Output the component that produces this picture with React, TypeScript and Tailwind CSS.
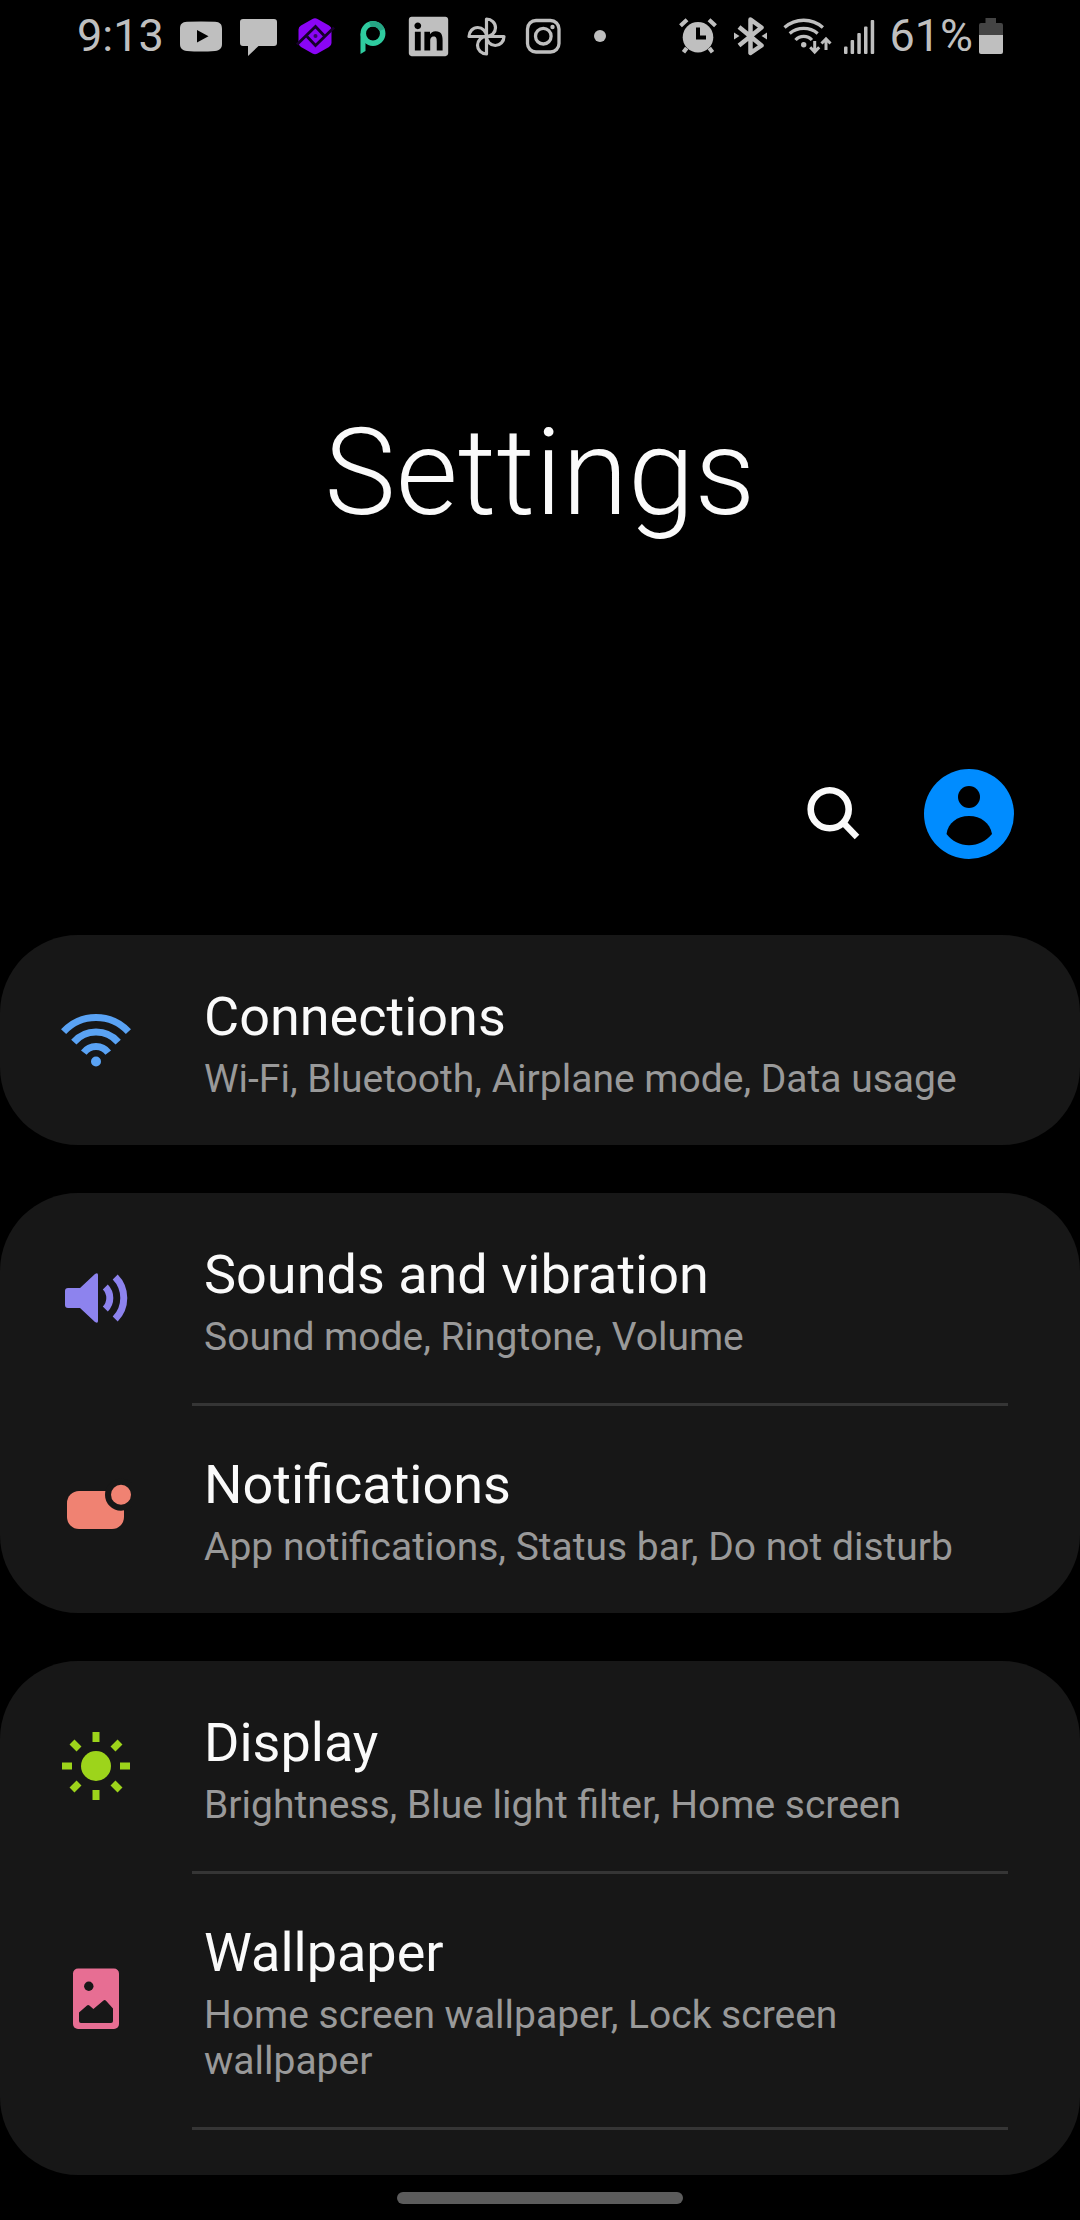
import type { ReactNode } from "react";
import { FaLinkedin } from "react-icons/fa";

type SettingsItem = {
  title: string;
  summary: string;
  icon: ReactNode;
};

const StatusIcon = ({ children }: { children: ReactNode }) => (
  <svg viewBox="0 0 42 42" className="size-[42px]" fill="currentColor">
    {children}
  </svg>
);

const NotificationIcons = () => (
  <div className="flex items-center gap-[15px]">
    {/* YouTube */}
    <StatusIcon>
      <path
        fillRule="evenodd"
        d="M7 6.8Q21 6 35 6.8C40 7.2 42 9 42 14v15c0 4-2 6.500-7 7Q21 37 7 36C2 35.500 0 33 0 29V14C0 9 2 7.200 7 6.800ZM17 15v12.500l11.500-6.200Z"
      />
    </StatusIcon>
    {/* Messages */}
    <StatusIcon>
      <path d="M6 4h31q3 0 3 3v21q0 3-3 3H21.500L11 41V31H6q-3 0-3-3V7q0-3 3-3Z" />
    </StatusIcon>
    <StatusIcon>
      <path
        className="fill-[#8a05f5]"
        d="M18.500 4q2.500-1.500 5 0L35 10.500q2.500 1.500 2.500 4V28q0 2.500-2.500 4L23.500 38.500q-2.500 1.500-5 0L7 32q-2.500-1.500-2.500-4V14.500q0-2.500 2.500-4Z"
      />
      <g fill="none" className="stroke-[#16002b]" strokeWidth="2.800">
        <path d="M3 29.500 21.500 11.500 30 20.500" />
        <path d="M40 12.500 21.500 30.500 13 21.500" />
      </g>
      <circle cx="21.500" cy="21" r="2" className="fill-[#3a0669]" />
    </StatusIcon>
    <StatusIcon>
      <g fill="none" strokeWidth="5.5">
        <circle cx="22" cy="18.500" r="9.700" className="stroke-[#2fcb9f]" />
        <path d="M19 9.400A9.700 9.700 0 0 1 31 15" className="stroke-[#25a584]" />
      </g>
      <path d="M9.500 18.500h5v17.500L9.500 39Z" className="fill-[#2fcb9f]" />
    </StatusIcon>
    <div className="flex size-[42px] items-center justify-center">
      <FaLinkedin className="size-[45px] shrink-0" />
    </div>
    {/* Photos pinwheel */}
    <StatusIcon>
      <g fill="none" stroke="currentColor" strokeWidth="3.2" strokeLinejoin="round">
        <path d="M21.500 4v17.500c5 0 9-4 9-8.800s-4-8.700-9-8.700Z" />
        <path d="M39 21.500H21.500c0 5 4 9 8.800 9s8.700-4 8.700-9Z" />
        <path d="M21.500 39V21.500c-5 0-9 4-9 8.800s4 8.700 9 8.700Z" />
        <path d="M4 21.500h17.500c0-5-4-9-8.800-9s-8.700 4-8.700 9Z" />
      </g>
    </StatusIcon>
    {/* Instagram */}
    <StatusIcon>
      <g fill="none" stroke="currentColor" strokeWidth="3.3">
        <rect x="5.500" y="5.500" width="31.500" height="31.500" rx="8.500" />
        <circle cx="21.300" cy="21.200" r="7.800" />
      </g>
      <circle cx="30.500" cy="12" r="2.200" />
    </StatusIcon>
    <StatusIcon>
      <circle cx="21" cy="21" r="6" />
    </StatusIcon>
  </div>
);

const SystemIcons = () => (
  <div className="flex items-center gap-3.5">
    {/* Alarm */}
    <svg viewBox="0 0 38 42" className="h-[42px] w-[38px]" fill="currentColor">
      <path d="M7.700 33 4.500 37.200M30.300 33l3.200 4.200M1.500 10.800 8 4.800M36.500 10.800 30 4.800" stroke="currentColor" strokeWidth="4.2" />
      <circle cx="19" cy="22.300" r="15.300" />
      <path d="M19 12.500v10h8" fill="none" className="stroke-black" strokeWidth="4" />
    </svg>
    {/* Bluetooth */}
    <svg viewBox="0 0 38 42" className="h-[42px] w-[38px]" fill="currentColor">
      <path
        d="M8 12 30.500 30.500 19.500 38V4.500L30.500 12.500 8 30.500"
        fill="none"
        stroke="currentColor"
        strokeWidth="4.500"
        strokeLinejoin="round"
      />
      <path d="M3 17.500v7l5.500-3.500ZM36 17.500v7L30.500 21Z" />
    </svg>
    {/* Wi-Fi with traffic arrows */}
    <svg viewBox="0 0 46 42" className="h-[42px] w-[46px] overflow-visible" fill="currentColor">
      <circle cx="20.700" cy="29.700" r="2.700" />
      <g fill="none" stroke="currentColor" strokeWidth="3.300">
        <path d="M1.500 12.500a29 29 0 0 1 38.400 0" />
        <path d="M6.700 18.500a22 22 0 0 1 28 0" />
        <path d="M12.500 25a11 11 0 0 1 16.400 0" />
        <path d="M31.700 26v11M27.200 32.300l4.500 4.700 4.500-4.700M43 35V24M38.500 28.500l4.500-4.700 4.500 4.700" strokeWidth="3" />
      </g>
    </svg>
    {/* Signal */}
    <svg viewBox="0 0 32 42" className="h-[42px] w-8" fill="currentColor">
      <rect x="1" y="31.500" width="3.500" height="7.500" rx="1" />
      <rect x="7.600" y="25" width="3.500" height="14" rx="1" />
      <rect x="14.300" y="18" width="3.500" height="21" rx="1" />
      <rect x="21" y="11.500" width="3.500" height="27.500" rx="1" />
      <rect x="27.700" y="5" width="3.500" height="34" rx="1" />
    </svg>
    <div className="flex items-center gap-1.5">
      <span className="text-[45px] leading-[54px]">61%</span>
      <svg viewBox="0 0 24 42" className="h-[42px] w-6" fill="currentColor">
        <path d="M6.500 3h10.500v5H22q2 0 2 2v10H0V10q0-2 2-2h4.500Z" className="fill-[#444444]" />
        <path d="M0 20h24v17q0 2-2 2H2q-2 0-2-2Z" />
      </svg>
    </div>
  </div>
);

const StatusBar = () => (
  <div className="flex h-18 items-center justify-between px-[77px] text-[#bfbfbf]">
    <div className="flex items-center gap-4">
      <time className="text-[45px] leading-[54px]">9:13</time>
      <NotificationIcons />
    </div>
    <SystemIcons />
  </div>
);

const WifiIcon = () => (
  <svg viewBox="0 0 72 72" className="size-18 text-[#5aa3f5]" fill="currentColor">
    <circle cx="36" cy="57.500" r="5" />
    <g fill="none" stroke="currentColor" strokeWidth="7">
      <path d="M3.600 27.700a44.200 44.200 0 0 1 64.800 0" />
      <path d="M13.800 38.100a29.500 29.500 0 0 1 44.400 0" />
      <path d="M23.800 48.600a15.200 15.200 0 0 1 24.400 0" />
    </g>
  </svg>
);

const SoundIcon = () => (
  <svg viewBox="0 0 72 72" className="size-18 text-[#8d83ee]" fill="currentColor">
    <path d="M8 26h12L35 12q3-2 3 1v46q0 3-3 1L20 46H8q-3 0-3-3V29q0-3 3-3Z" />
    <g fill="none" stroke="currentColor" strokeWidth="7">
      <path d="M45.300 25a15.700 15.700 0 0 1 0 22" />
      <path d="M55.200 15a30 30 0 0 1 0 42" />
    </g>
  </svg>
);

const NotificationIcon = () => (
  <svg viewBox="0 0 72 72" className="size-18 text-[#f08272]" fill="currentColor">
    <rect x="7" y="19" width="57" height="38" rx="12" />
    <circle cx="61" cy="22.700" r="16" className="fill-[#171717]" />
    <circle cx="61" cy="22.700" r="10" />
  </svg>
);

const DisplayIcon = () => (
  <svg viewBox="0 0 72 72" className="size-18 text-[#9dd41b]" fill="currentColor">
    <circle cx="36" cy="36" r="15" />
    <g stroke="currentColor" strokeWidth="7">
      <path d="M36 2v10M36 60v10M2 36h10M60 36h10" />
      <path d="M12 12l7 7M53 53l7 7M60 12l-7 7M19 53l-7 7" />
    </g>
  </svg>
);

const WallpaperIcon = () => (
  <svg viewBox="0 0 72 72" className="size-18 text-[#e76e93]" fill="currentColor">
    <rect x="13" y="5.500" width="46" height="60.500" rx="5" />
    <g className="fill-[#171717]">
      <circle cx="28.800" cy="23.300" r="4.700" />
      <path d="M19 49.500 27 42.500q1.200-1 2.400 0l4 3.500 9.800-8.300q1.500-1.200 2.800 0L53 45.500V58q0 2-2 2H21q-2 0-2-2Z" />
    </g>
  </svg>
);

const groups: SettingsItem[][] = [
  [
    {
      title: "Connections",
      summary: "Wi-Fi, Bluetooth, Airplane mode, Data usage",
      icon: <WifiIcon />,
    },
  ],
  [
    {
      title: "Sounds and vibration",
      summary: "Sound mode, Ringtone, Volume",
      icon: <SoundIcon />,
    },
    {
      title: "Notifications",
      summary: "App notifications, Status bar, Do not disturb",
      icon: <NotificationIcon />,
    },
  ],
  [
    {
      title: "Display",
      summary: "Brightness, Blue light filter, Home screen",
      icon: <DisplayIcon />,
    },
    {
      title: "Wallpaper",
      summary: "Home screen wallpaper, Lock screen wallpaper",
      icon: <WallpaperIcon />,
    },
  ],
];

const SettingsRow = ({ item, divided }: { item: SettingsItem; divided: boolean }) => (
  <li>
    <a href="#" className="flex pr-18">
      <span className="flex w-48 shrink-0 items-center justify-center">
        {item.icon}
      </span>
      <span
        className={`flex-1 border-t-3 pt-[47px] pr-9 pb-[43px] pl-3 ${
          divided ? "border-[#353535]" : "border-transparent"
        }`}
      >
        <span className="block text-[54px] leading-[64px] text-[#fafafa]">
          {item.title}
        </span>
        <span className="mt-[7px] block text-[39px] leading-[46px] text-[#999999]">
          {item.summary}
        </span>
      </span>
    </a>
  </li>
);

const App = () => {
  return (
    <div className="flex min-h-screen flex-col bg-black font-['Roboto',sans-serif] text-[#fafafa]">
      <StatusBar />

      <header className="pt-[331px]">
        <h1 className="text-center text-[120px] leading-[140px] font-light">
          Settings
        </h1>
        <div className="mt-[226px] flex items-center justify-end gap-16 pr-[66px]">
          <button type="button" aria-label="Search">
            <svg viewBox="0 0 54 54" className="size-[54px]" fill="none" stroke="currentColor">
              <circle cx="23.700" cy="22.300" r="19" strokeWidth="6.600" />
              <path d="M37 35.500 51 50" strokeWidth="6.400" />
            </svg>
          </button>
          <button type="button" aria-label="Account">
            <svg viewBox="0 0 90 90" className="size-[90px]">
              <circle cx="45" cy="45" r="45" className="fill-[#008cff]" />
              <circle cx="45" cy="28" r="11" />
              <path d="M22.500 65C24 54 33 47 45 47s21 7 23 18C62 72 54 76.300 45 76.300S28 72 22.500 65Z" />
            </svg>
          </button>
        </div>
      </header>

      <main className="mt-19 flex flex-col gap-12">
        {groups.map((group, i) => (
          <ul key={i} className="overflow-hidden rounded-[78px] bg-[#171717]">
            {group.map((item, j) => (
              <SettingsRow key={item.title} item={item} divided={j > 0} />
            ))}
            {i === groups.length - 1 && (
              <li className="mr-18 ml-48 h-12 border-t-3 border-[#353535]" />
            )}
          </ul>
        ))}
      </main>

      <div className="flex h-[45px] items-center justify-center">
        <div className="h-3 w-[286px] rounded-full bg-[#5c5c5c]" />
      </div>
    </div>
  );
};

export default App;
